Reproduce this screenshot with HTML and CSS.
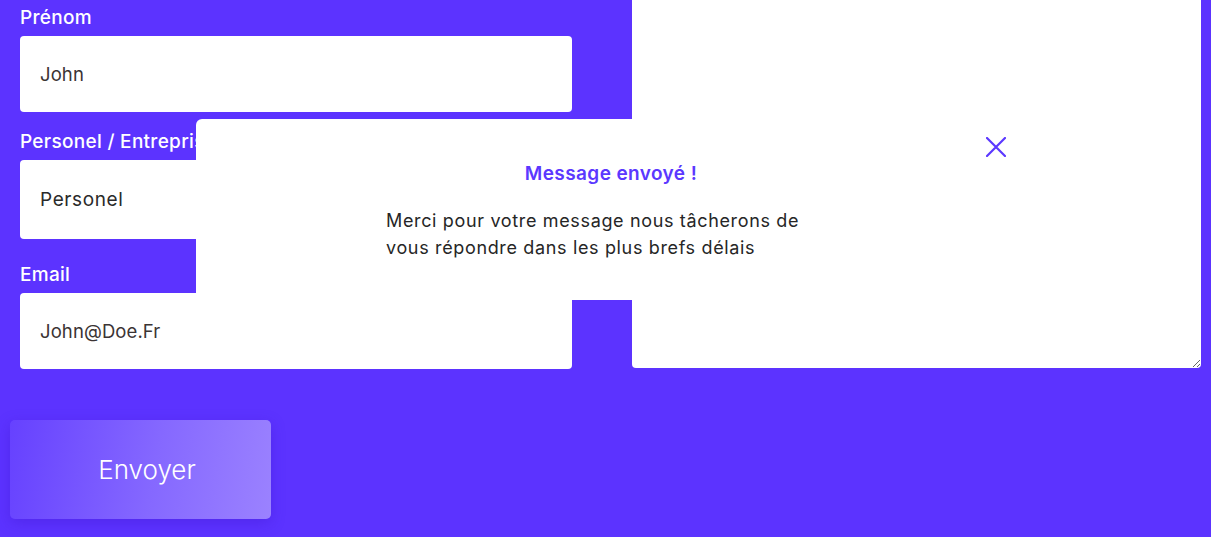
FILE: index.html
```html
<!DOCTYPE html>
<html lang="fr">
<head>
<meta charset="utf-8">
<title>Contact</title>
<link rel="stylesheet" href="styles.css">
</head>
<body>
<main class="page">
  <form class="contact-form">
    <div class="fields">
      <div class="field">
        <label class="field-label" for="prenom">Prénom</label>
        <input class="field-input" id="prenom" type="text" value="John">
      </div>
      <div class="field">
        <label class="field-label" for="type">Personel / Entreprise</label>
        <div class="field-input field-select" id="type">Personel</div>
      </div>
      <div class="field field-last">
        <label class="field-label" for="email">Email</label>
        <input class="field-input" id="email" type="email" value="John@Doe.Fr">
      </div>
    </div>
    <div class="message-col">
      <textarea class="message-input" aria-label="Message"></textarea>
    </div>
  </form>
  <div class="actions">
    <button class="send-btn" type="button">Envoyer</button>
  </div>

  <div class="popup" role="dialog">
    <button class="popup-close" type="button" aria-label="Fermer">
      <svg width="20" height="20" viewBox="0 0 20 20"><path d="M1 1 L19 19 M19 1 L1 19" stroke="#5b38ff" stroke-width="2.2" stroke-linecap="round" fill="none"/></svg>
    </button>
    <h2 class="popup-title">Message envoyé !</h2>
    <p class="popup-text">Merci pour votre message nous tâcherons de vous répondre dans les plus brefs délais</p>
  </div>
</main>
</body>
</html>
```

FILE: styles.css
```css
* { box-sizing: border-box; }

html, body {
  margin: 0;
  padding: 0;
  background: #5c33ff;
  height: 100%;
  overflow: hidden;
}

body {
  font-family: Inter, "Noto Sans", sans-serif;
}

.page {
  position: relative;
  min-height: 537px;
}

.contact-form {
  display: grid;
  grid-template-columns: 552px 1fr;
  column-gap: 60px;
  padding: 6px 10px 0 20px;
}

.fields {
  display: flex;
  flex-direction: column;
}

.field {
  display: flex;
  flex-direction: column;
  margin-bottom: 18px;
}

.field-last { margin-bottom: 0; }

.field:nth-child(2) { margin-bottom: 24px; }

.field-label {
  color: #ffffff;
  font-size: 19px;
  font-weight: 500;
  letter-spacing: 0.3px;
  line-height: 24px;
  margin-bottom: 6px;
  white-space: nowrap;
}

.field-input {
  height: 76px;
  border: none;
  border-radius: 4px;
  background: #ffffff;
  padding: 0 20px;
  font-family: Inter, "Noto Sans", sans-serif;
  font-size: 18.5px;
  letter-spacing: 0.1px;
  color: #3b3434;
  outline: none;
}

.field-select {
  height: 79px;
  display: flex;
  align-items: center;
  font-size: 19px;
  letter-spacing: 0.6px;
  color: #2a2a2a;
}

.message-col {
  display: flex;
  margin-top: -6px;
  margin-bottom: 1px;
}

.message-input {
  flex: 1;
  border: none;
  border-radius: 0 0 4px 4px;
  background: #ffffff;
  resize: both;
  outline: none;
}

.actions {
  padding: 51px 0 0 10px;
}

.send-btn {
  width: 261px;
  height: 99px;
  border: none;
  border-radius: 5px;
  padding: 0 0 0 13px;
  background: linear-gradient(100deg, #6641ff 0%, #8568ff 55%, #9b82ff 100%);
  box-shadow: 0 4px 14px rgba(60, 20, 200, 0.35);
  color: #ffffff;
  font-family: Inter, "Noto Sans", sans-serif;
  font-size: 26px;
  font-weight: 300;
  cursor: pointer;
}

.popup {
  position: absolute;
  left: 196px;
  top: 119px;
  width: 830px;
  height: 181px;
  background: #ffffff;
  border-radius: 6px 6px 0 0;
  padding-top: 43px;
  display: flex;
  flex-direction: column;
  align-items: center;
}

.popup-close {
  position: absolute;
  top: 18px;
  right: 20px;
  width: 20px;
  height: 20px;
  padding: 0;
  border: none;
  background: none;
  display: flex;
  cursor: pointer;
}

.popup-title {
  margin: 0;
  font-size: 19px;
  font-weight: 600;
  letter-spacing: 0.4px;
  line-height: 24px;
  color: #5b38ff;
}

.popup-text {
  margin: 21px 0 0;
  width: 450px;
  padding-right: 20px;
  font-size: 18px;
  letter-spacing: 0.65px;
  line-height: 27px;
  color: #262626;
}
```
